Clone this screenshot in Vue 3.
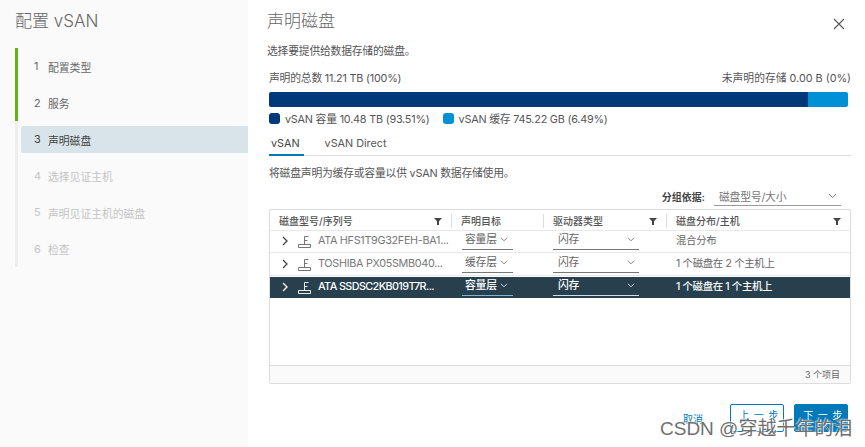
<script setup>
const steps = [
  { n: 1, t: '配置类型', s: 'done' },
  { n: 2, t: '服务', s: 'done' },
  { n: 3, t: '声明磁盘', s: 'active' },
  { n: 4, t: '选择见证主机', s: 'off' },
  { n: 5, t: '声明见证主机的磁盘', s: 'off' },
  { n: 6, t: '检查', s: 'off' },
]
const rows = [
  { name: 'ATA HFS1T9G32FEH-BA1...', target: '容量层', type: '闪存', dist: '混合分布' },
  { name: 'TOSHIBA PX05SMB040...', target: '缓存层', type: '闪存', dist: '1 个磁盘在 2 个主机上' },
  { name: 'ATA SSDSC2KB019T7R...', target: '容量层', type: '闪存', dist: '1 个磁盘在 1 个主机上', sel: true },
]
const heads = [
  { t: '磁盘型号/序列号', f: true },
  { t: '声明目标', f: false },
  { t: '驱动器类型', f: true },
  { t: '磁盘分布/主机', f: true },
]
</script>

<template>
  <div class="wizard">
    <aside class="side">
      <h1 class="side-title">配置 vSAN</h1>
      <ol class="steps">
        <li v-for="s in steps" :key="s.n" class="step" :class="s.s">
          <span class="num">{{ s.n }}</span><span class="lbl">{{ s.t }}</span>
        </li>
      </ol>
    </aside>
    <main class="main">
      <div class="top">
        <h2 class="title">声明磁盘</h2>
        <svg class="close" width="14" height="14" viewBox="0 0 14 14"><path d="M2 2l10 10M12 2L2 12" stroke="#565656" stroke-width="1.1" fill="none"/></svg>
      </div>
      <p class="sub">选择要提供给数据存储的磁盘。</p>
      <div class="inner">
        <div class="totals"><span>声明的总数 11.21 TB (100%)</span><span class="unclaimed">未声明的存储 0.00 B (0%)</span></div>
        <div class="bar"><div class="cap"></div><div class="cache"></div></div>
        <div class="legend">
          <i class="sw dark"></i><span>vSAN 容量 10.48 TB (93.51%)</span>
          <i class="sw light"></i><span>vSAN 缓存 745.22 GB (6.49%)</span>
        </div>
        <div class="tabs"><span class="tab on">vSAN</span><span class="tab">vSAN Direct</span></div>
        <p class="desc">将磁盘声明为缓存或容量以供 vSAN 数据存储使用。</p>
        <div class="group">
          <b>分组依据:</b>
          <span class="gsel">磁盘型号/大小
            <svg width="9" height="6" viewBox="0 0 9 6"><path d="M1 1l3.500 3.500L8 1" stroke="#777" fill="none"/></svg>
          </span>
        </div>
        <div class="grid">
          <div class="row head">
            <div v-for="h in heads" :key="h.t" class="cell hcell">
              <span>{{ h.t }}</span>
              <svg v-if="h.f" width="8" height="8" viewBox="0 0 8 8"><path d="M0 1h8L5 4.200V8H3V4.200z" fill="#444"/></svg>
            </div>
          </div>
          <div v-for="r in rows" :key="r.name" class="row body" :class="{ sel: r.sel }">
            <div class="cell c1">
              <svg class="chev" width="7" height="10" viewBox="0 0 7 10"><path d="M1 1l4 4-4 4" stroke="currentColor" stroke-width="1.3" fill="none"/></svg>
              <svg class="disk" width="13" height="13" viewBox="0 0 13 13"><path d="M.5 9.500h12v3H.5zM6.500 9.500V1.500h4M6.500 5.500h3" stroke="currentColor" stroke-width=".9" fill="none"/></svg>
              <span class="name">{{ r.name }}</span>
            </div>
            <div class="cell c2">
              <span class="sel-box narrow">{{ r.target }}
                <svg width="8" height="5" viewBox="0 0 8 5"><path d="M1 .8l3 3 3-3" stroke="currentColor" stroke-width=".8" fill="none"/></svg>
              </span>
            </div>
            <div class="cell c3">
              <span class="sel-box wide">{{ r.type }}
                <svg width="8" height="5" viewBox="0 0 8 5"><path d="M1 .8l3 3 3-3" stroke="currentColor" stroke-width=".8" fill="none"/></svg>
              </span>
            </div>
            <div class="cell c4">{{ r.dist }}</div>
          </div>
          <div class="spacer"></div>
          <div class="foot">3 个项目</div>
        </div>
      </div>
      <div class="actions">
        <button class="btn link">取消</button>
        <button class="btn outline">上一步</button>
        <button class="btn primary">下一步</button>
      </div>
    </main>
    <div class="mark">CSDN @穿越千年的泪</div>
  </div>
</template>

<style scoped>
.wizard {
  position: relative;
  display: flex;
  width: 865px;
  height: 447px;
  overflow: hidden;
  background: #fff;
  color: #565656;
  font-family: "Inter", "Noto Sans CJK SC", sans-serif;
  font-size: 10.8px;
  letter-spacing: -.2px;
}
.side { width: 248px; flex: none; background: #fafafa; padding: 11px 0 0 15px; box-sizing: border-box; letter-spacing: 0; }
.side-title { margin: 0 0 17px; font-size: 17px; font-weight: 300; line-height: 20px; color: #666; }
.steps { list-style: none; margin: 0; padding: 5px 0 0; border-left: 3px solid #eee; height: 219px; box-sizing: border-box; position: relative; }
.steps::before { content: ""; position: absolute; left: -3px; top: 0; width: 3px; height: 73px; background: #60b515; }
.step { display: flex; align-items: center; height: 27px; margin: 0 0 9.500px 3px; padding-left: 13px; color: #666; }
.step.active { background: #d9e4ea; color: #444; border-radius: 2px 0 0 2px; }
.step.off { color: #c4c4c4; }
.num { width: 14px; }
.main { flex: 1; min-width: 0; padding: 11px 14px 0 19px; display: flex; flex-direction: column; }
.top { display: flex; justify-content: space-between; align-items: flex-start; height: 25px; }
.title { margin: 0; font-size: 17px; font-weight: 300; line-height: 20px; color: #666; letter-spacing: 0; }
.close { margin: 6px 5px 0 0; }
.sub { margin: 8px 0 0; line-height: 16px; color: #555; }
.inner { padding: 0 0 0 2px; margin-top: 11px; }
.totals { display: flex; justify-content: space-between; line-height: 16px; }
.unclaimed { letter-spacing: 0; }
.bar { display: flex; height: 15px; margin: 5px 3px 0 0; border-radius: 2px; overflow: hidden; }
.cap { width: 539px; background: #00397a; }
.cache { flex: 1; background: #0090d6; }
.legend { display: flex; align-items: center; height: 16px; margin-top: 3px; }
.sw { width: 11px; height: 11px; border-radius: 3px; margin-right: 5px; }
.sw.dark { background: #00397a; }
.sw.light { background: #0090d6; margin-left: 13px; }
.tabs { display: flex; gap: 19px; height: 24px; margin-top: 5px; border-bottom: 1px solid #ddd; letter-spacing: 0; }
.tab { padding: 5px 2px 0; height: 18px; line-height: 16px; }
.tab.on { border-bottom: 2px solid #0079b8; padding-right: 4px; color: #444; }
.desc { margin: 10px 0 0; line-height: 16px; }
.group { display: flex; justify-content: flex-end; align-items: center; height: 20px; margin: 4px 10px 0 0; }
.group b { font-weight: 600; font-size: 10px; color: #444; margin-right: 9px; letter-spacing: 0; }
.gsel { display: flex; justify-content: space-between; align-items: center; width: 127px; height: 20px; padding: 0 4px 0 5px; box-sizing: border-box; border-bottom: 1px solid #999; color: #777; }
.grid { display: flex; flex-direction: column; height: 175px; margin: 3px 0 0; border: 1px solid #ddd; border-radius: 2px; box-sizing: border-box; }
.row { display: grid; grid-template-columns: 182px 92px 123px 1fr; align-items: center; }
.head { height: 20px; border-bottom: 1px solid #e8e8e8; font-size: 10px; font-weight: 500; color: #555; letter-spacing: 0; }
.hcell { display: flex; justify-content: space-between; align-items: center; padding: 0 9px; height: 14px; margin-top: 1px; border-right: 1px solid #ddd; }
.hcell:last-child { border-right: 0; }
.body { height: 21px; margin-bottom: 1px; border-bottom: 1px solid #e8e8e8; color: #666; }
.body.sel { background: #28404d; color: #fff; font-weight: 500; border-bottom: 0; }
.cell { line-height: 16px; }
.body .cell { padding-bottom: 1px; }
.c1 { display: flex; align-items: center; padding-left: 12px; white-space: nowrap; }
.chev { flex: none; margin-right: 9px; color: #444; }
.sel .chev { color: #fff; }
.disk { flex: none; margin-right: 7px; }
.name { color: #777; letter-spacing: -.3px; }
.sel .name { color: #fff; letter-spacing: -.6px; }
.c2 { padding-left: 10px; }
.c3 { padding-left: 9px; }
.c4 { padding-left: 9px; font-size: 10.4px; letter-spacing: -.3px; }
.sel-box { display: flex; justify-content: space-between; align-items: center; height: 17px; padding: 0 5px 2px 3px; box-sizing: border-box; border-bottom: 1px solid #777; }
.narrow { width: 51px; }
.wide { width: 86px; padding: 0 4px 2px 5px; }
.sel .narrow { border-bottom-color: #7ab8d6; }
.sel .wide { border-bottom-color: #cde; }
.spacer { flex: 1; }
.foot { height: 18px; line-height: 17px; text-align: right; padding-right: 10px; background: #fafafa; border-top: 1px solid #ddd; font-size: 9px; letter-spacing: 0; color: #666; box-sizing: border-box; }
.actions { display: flex; justify-content: flex-end; align-items: center; gap: 10px; margin-top: 20px; padding-right: 3px; }
.btn { height: 28px; font: inherit; font-size: 10px; border-radius: 2px; letter-spacing: 4.500px; white-space: nowrap; padding: 0 0 7px 8px; box-sizing: border-box; }
.link { border: 0; background: none; color: #0079b8; letter-spacing: 0; padding: 0 6px; margin-right: 11px; }
.outline { width: 54px; background: #fff; border: 1px solid #0079b8; color: #0079b8; }
.primary { width: 54px; background: #0079b8; border: 1px solid #0079b8; color: #fff; }
.mark { position: absolute; left: 660px; top: 416px; font-size: 19px; line-height: 26px; letter-spacing: 0; color: #707070; text-shadow: 1px 1px 1px #fff, -1px -1px 1px rgba(255,255,255,.6); font-family: "Liberation Sans", "Noto Sans CJK SC", sans-serif; white-space: nowrap; }
</style>
